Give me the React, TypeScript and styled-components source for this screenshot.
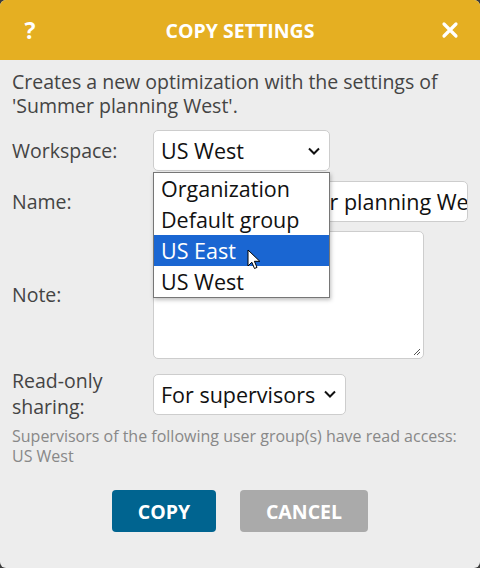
import React from "react"
import styled, { createGlobalStyle } from "styled-components"

const GlobalStyle = createGlobalStyle`
  html, body {
    margin: 0;
    padding: 0;
    background: #3c3c3c;
  }
  body {
    font-family: "Open Sans", "Noto Sans", sans-serif;
  }
`

const Dialog = styled.div`
  width: 480px;
  height: 568px;
  background-color: #ededed;
  border-radius: 6px;
  overflow: hidden;
  display: flex;
  flex-direction: column;
  color: #444;
`

const Header = styled.div`
  height: 60px;
  flex-shrink: 0;
  background-color: #e5af22;
  color: #fff;
  display: flex;
  align-items: center;
  justify-content: space-between;
  padding: 0 20px 0 20px;
`

const HeaderIcon = styled.span`
  font-weight: 700;
  font-size: 23px;
  width: 20px;
  display: flex;
  justify-content: center;
`

const Title = styled.h1`
  margin: 0;
  font-size: 19.5px;
  font-weight: 700;
`

const Body = styled.div`
  padding: 10px 12px 0 12px;
  display: flex;
  flex-direction: column;
`

const Description = styled.p`
  margin: 0 0 12px 0;
  font-size: 19.5px;
  line-height: 24px;
`

const FormRow = styled.div<{ $gap?: number }>`
  display: grid;
  grid-template-columns: 141px 1fr;
  align-items: center;
  margin-top: ${(p) => p.$gap ?? 0}px;
  position: relative;
`

const Label = styled.label`
  font-size: 19.5px;
  line-height: 26px;
`

const SelectBox = styled.div<{ $width: number }>`
  width: ${(p) => p.$width}px;
  height: 41px;
  box-sizing: border-box;
  background: #fff;
  border: 1px solid #cdcdcd;
  border-radius: 5px;
  display: flex;
  align-items: center;
  justify-content: space-between;
  padding: 0 8px 0 7px;
  font-size: 21.5px;
  color: #111;
  white-space: nowrap;
`

const TextInput = styled.div`
  width: 315px;
  height: 41px;
  box-sizing: border-box;
  background: #fff;
  border: 1px solid #cdcdcd;
  border-radius: 5px;
  display: flex;
  align-items: center;
  padding: 0 7px 0 17px;
  font-size: 21.5px;
  color: #111;
  white-space: nowrap;
  overflow: hidden;
`

const TextArea = styled.div`
  width: 271px;
  height: 128px;
  box-sizing: border-box;
  background: #fff;
  border: 1px solid #cdcdcd;
  border-radius: 5px;
  position: relative;
`

const ResizeGrip = styled.svg`
  position: absolute;
  right: 2px;
  bottom: 2px;
`

const Dropdown = styled.ul`
  position: absolute;
  left: 141px;
  top: 42px;
  width: 177px;
  box-sizing: border-box;
  margin: 0;
  padding: 0;
  list-style: none;
  background: #fff;
  border: 1px solid #767676;
  box-shadow: 1px 2px 4px rgba(0, 0, 0, 0.25);
  z-index: 2;
`

const Option = styled.li<{ $active?: boolean }>`
  height: 31px;
  line-height: 31px;
  padding: 0 7px;
  font-size: 21.5px;
  color: ${(p) => (p.$active ? "#fff" : "#111")};
  background: ${(p) => (p.$active ? "#1a66d2" : "transparent")};
  position: relative;
  white-space: nowrap;
`

const Cursor = styled.svg`
  position: absolute;
  left: 93px;
  top: 14px;
`

const HelpText = styled.p`
  margin: 6px 0 0 0;
  font-size: 16px;
  line-height: 20px;
  color: #888;
`

const Buttons = styled.div`
  display: flex;
  justify-content: center;
  gap: 24px;
  margin-top: 24px;
`

const Button = styled.button<{ $variant: "primary" | "secondary" }>`
  height: 42px;
  border: none;
  border-radius: 4px;
  padding: 0 20px;
  min-width: ${(p) => (p.$variant === "primary" ? 104 : 128)}px;
  background: ${(p) => (p.$variant === "primary" ? "#006490" : "#aaaaaa")};
  color: #fff;
  font-family: inherit;
  font-size: 19.5px;
  font-weight: 700;
`

const Chevron = () => (
  <svg width="14" height="10" viewBox="0 0 14 10">
    <path d="M2 2.5 L7 7.5 L12 2.5" fill="none" stroke="#111" strokeWidth="2" />
  </svg>
)

const workspaces = ["Organization", "Default group", "US East", "US West"]

const App: React.FC = () => {
  return (
    <>
      <GlobalStyle />
      <Dialog>
        <Header>
          <HeaderIcon>?</HeaderIcon>
          <Title>COPY SETTINGS</Title>
          <HeaderIcon>
            <svg width="18" height="18" viewBox="0 0 18 18">
              <path d="M3 3 L15 15 M15 3 L3 15" stroke="#fff" strokeWidth="3.2" strokeLinecap="round" />
            </svg>
          </HeaderIcon>
        </Header>
        <Body>
          <Description>
            Creates a new optimization with the settings of 'Summer planning West'.
          </Description>
          <FormRow>
            <Label>Workspace:</Label>
            <SelectBox $width={177}>
              US West
              <Chevron />
            </SelectBox>
            <Dropdown>
              {workspaces.map((w) => (
                <Option key={w} $active={w === "US East"}>
                  {w}
                  {w === "US East" && (
                    <Cursor width="15" height="22" viewBox="0 0 15 22">
                      <path
                        d="M1 1 L1 17 L4.8 13.2 L7.5 19.5 L10 18.4 L7.4 12.3 L12.8 12.3 Z"
                        fill="#fff"
                        stroke="#000"
                        strokeWidth="1"
                      />
                    </Cursor>
                  )}
                </Option>
              ))}
            </Dropdown>
          </FormRow>
          <FormRow $gap={10}>
            <Label>Name:</Label>
            <TextInput>Copy of Summer planning West</TextInput>
          </FormRow>
          <FormRow $gap={9}>
            <Label>Note:</Label>
            <TextArea>
              <ResizeGrip width="10" height="10" viewBox="0 0 10 10">
                <path d="M9 3 L3 9 M9 6 L6 9" stroke="#555" strokeWidth="1" />
              </ResizeGrip>
            </TextArea>
          </FormRow>
          <FormRow $gap={9}>
            <Label>
              Read-only
              <br />
              sharing:
            </Label>
            <SelectBox $width={193}>
              For supervisors
              <Chevron />
            </SelectBox>
          </FormRow>
          <HelpText>
            Supervisors of the following user group(s) have read access:
            <br />
            US West
          </HelpText>
          <Buttons>
            <Button $variant="primary">COPY</Button>
            <Button $variant="secondary">CANCEL</Button>
          </Buttons>
        </Body>
      </Dialog>
    </>
  )
}

export default App
